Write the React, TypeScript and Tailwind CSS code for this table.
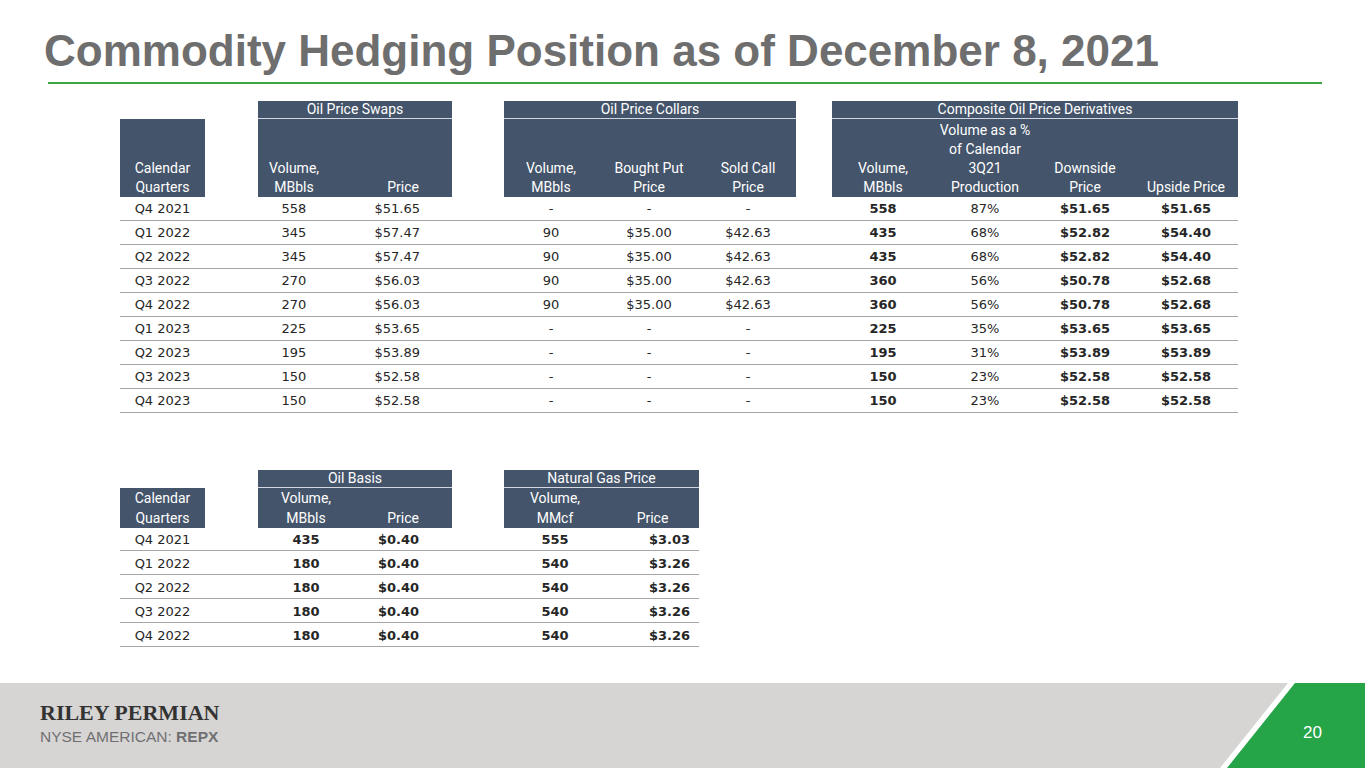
import React from "react";

const cols1 =
  "grid-cols-[85px_53px_72px_122px_52px_94px_102px_96px_36px_102px_102px_98px_104px]";
const cols2 = "grid-cols-[85px_53px_96px_98px_52px_102px_93px]";

const hdrFont = "font-['Roboto',sans-serif]";
const dataFont = "font-['DejaVu_Sans',sans-serif]";

// quarter, swap vol, swap price, collar vol, put, call, comp vol, pct, downside, upside
const rows1 = [
  ["Q4 2021", "558", "$51.65", "-", "-", "-", "558", "87%", "$51.65", "$51.65"],
  ["Q1 2022", "345", "$57.47", "90", "$35.00", "$42.63", "435", "68%", "$52.82", "$54.40"],
  ["Q2 2022", "345", "$57.47", "90", "$35.00", "$42.63", "435", "68%", "$52.82", "$54.40"],
  ["Q3 2022", "270", "$56.03", "90", "$35.00", "$42.63", "360", "56%", "$50.78", "$52.68"],
  ["Q4 2022", "270", "$56.03", "90", "$35.00", "$42.63", "360", "56%", "$50.78", "$52.68"],
  ["Q1 2023", "225", "$53.65", "-", "-", "-", "225", "35%", "$53.65", "$53.65"],
  ["Q2 2023", "195", "$53.89", "-", "-", "-", "195", "31%", "$53.89", "$53.89"],
  ["Q3 2023", "150", "$52.58", "-", "-", "-", "150", "23%", "$52.58", "$52.58"],
  ["Q4 2023", "150", "$52.58", "-", "-", "-", "150", "23%", "$52.58", "$52.58"],
];

const rows2 = [
  ["Q4 2021", "435", "$0.40", "555", "$3.03"],
  ["Q1 2022", "180", "$0.40", "540", "$3.26"],
  ["Q2 2022", "180", "$0.40", "540", "$3.26"],
  ["Q3 2022", "180", "$0.40", "540", "$3.26"],
  ["Q4 2022", "180", "$0.40", "540", "$3.26"],
];

function Head({ lines, align = "center", lh = "leading-[19px]" }: { lines: string[]; align?: "center" | "right"; lh?: string }) {
  return (
    <div
      className={`bg-[#44546a] text-white flex flex-col justify-end ${lh} ${
        align === "right" ? "items-end pr-[33px]" : "items-center text-center"
      }`}
    >
      {lines.map((l) => (
        <span key={l} className="whitespace-nowrap">{l}</span>
      ))}
    </div>
  );
}

function Group({ label, cls }: { label: string; cls: string }) {
  return (
    <div className={`${cls} bg-[#44546a] text-white text-center border-b border-[#d3d8e0] leading-[17px]`}>
      {label}
    </div>
  );
}

function Cell({ v, bold, right }: { v: string; bold?: boolean; right?: string }) {
  return (
    <div className={`${right ? `text-right ${right}` : "text-center"} ${bold ? "font-bold" : ""}`}>{v}</div>
  );
}

function HedgeTable() {
  return (
    <div className="ml-[120px] w-[1118px]">
      <div className={`grid ${cols1} h-[18px] text-[14px] ${hdrFont}`}>
        <Group label="Oil Price Swaps" cls="col-start-3 col-span-2" />
        <Group label="Oil Price Collars" cls="col-start-6 col-span-3" />
        <Group label="Composite Oil Price Derivatives" cls="col-start-10 col-span-4" />
      </div>
      <div className={`grid ${cols1} h-[78px] text-[14px] ${hdrFont}`}>
        <Head lines={["Calendar", "Quarters"]} />
        <div />
        <Head lines={["Volume,", "MBbls"]} />
        <Head lines={["Price"]} align="right" />
        <div />
        <Head lines={["Volume,", "MBbls"]} />
        <Head lines={["Bought Put", "Price"]} />
        <Head lines={["Sold Call", "Price"]} />
        <div />
        <Head lines={["Volume,", "MBbls"]} />
        <Head lines={["Volume as a %", "of Calendar", "3Q21", "Production"]} />
        <Head lines={["Downside", "Price"]} />
        <Head lines={["Upside Price"]} />
      </div>
      {rows1.map((r) => (
        <div
          key={r[0]}
          className={`grid ${cols1} h-[24px] items-center border-b border-[#a6a6a6] text-[13px] text-[#262626] ${dataFont}`}
        >
          <Cell v={r[0]} />
          <div />
          <Cell v={r[1]} />
          <Cell v={r[2]} right="pr-[32px]" />
          <div />
          <Cell v={r[3]} />
          <Cell v={r[4]} />
          <Cell v={r[5]} />
          <div />
          <Cell v={r[6]} bold />
          <Cell v={r[7]} />
          <Cell v={r[8]} bold />
          <Cell v={r[9]} bold />
        </div>
      ))}
    </div>
  );
}

function BasisTable() {
  return (
    <div className="ml-[120px] w-[579px] mt-[57px]">
      <div className={`grid ${cols2} h-[18px] text-[14px] ${hdrFont}`}>
        <Group label="Oil Basis" cls="col-start-3 col-span-2" />
        <Group label="Natural Gas Price" cls="col-start-6 col-span-2" />
      </div>
      <div className={`grid ${cols2} h-[39px] text-[14px] ${hdrFont}`}>
        <Head lines={["Calendar", "Quarters"]} lh="leading-[20px]" />
        <div />
        <Head lines={["Volume,", "MBbls"]} lh="leading-[20px]" />
        <Head lines={["Price"]} align="right" lh="leading-[20px]" />
        <div />
        <Head lines={["Volume,", "MMcf"]} lh="leading-[20px]" />
        <Head lines={["Price"]} lh="leading-[20px]" />
      </div>
      {rows2.map((r) => (
        <div
          key={r[0]}
          className={`grid ${cols2} h-[24px] pt-[3px] items-center border-b border-[#a6a6a6] text-[13px] text-[#262626] ${dataFont}`}
        >
          <Cell v={r[0]} />
          <div />
          <Cell v={r[1]} bold />
          <Cell v={r[2]} bold right="pr-[33px]" />
          <div />
          <Cell v={r[3]} bold />
          <Cell v={r[4]} bold right="pr-[9px]" />
        </div>
      ))}
    </div>
  );
}

export default function App() {
  return (
    <div className="w-[1365px] h-[768px] bg-white flex flex-col overflow-hidden">
      <div className="pt-[29px] pl-[44px]">
        <h1 className="h-[44px] leading-[44px] text-[44px] font-bold text-[#6e6e6e] font-['Liberation_Sans',sans-serif] whitespace-nowrap">
          Commodity Hedging Position as of December 8, 2021
        </h1>
      </div>
      <div className="mt-[9px] ml-[48px] w-[1274px] h-[2px] bg-[#39a845]" />
      <div className="mt-[17px]">
        <HedgeTable />
        <BasisTable />
      </div>

      {/* footer */}
      <div className="mt-auto h-[85px] bg-[#d6d5d4] relative">
        <div className="pl-[40px] pt-[19px]">
          <div className="text-[22px] leading-[22px] font-bold text-[#333333] font-['Liberation_Serif',serif]">
            RILEY PERMIAN
          </div>
          <div className="mt-[5px] text-[15.5px] leading-[15px] text-[#707072] font-['Liberation_Sans',sans-serif]">
            NYSE AMERICAN: <span className="font-bold">REPX</span>
          </div>
        </div>
        <svg className="absolute right-0 top-0" width="145" height="85" viewBox="0 0 145 85">
          <polygon points="68,0 145,0 145,85 0,85" fill="#ffffff" />
          <polygon points="75,0 145,0 145,85 7,85" fill="#26a448" />
        </svg>
        <div className="absolute right-[43px] top-[41px] text-[17px] leading-[17px] text-white font-['Liberation_Sans',sans-serif]">
          20
        </div>
      </div>
    </div>
  );
}
